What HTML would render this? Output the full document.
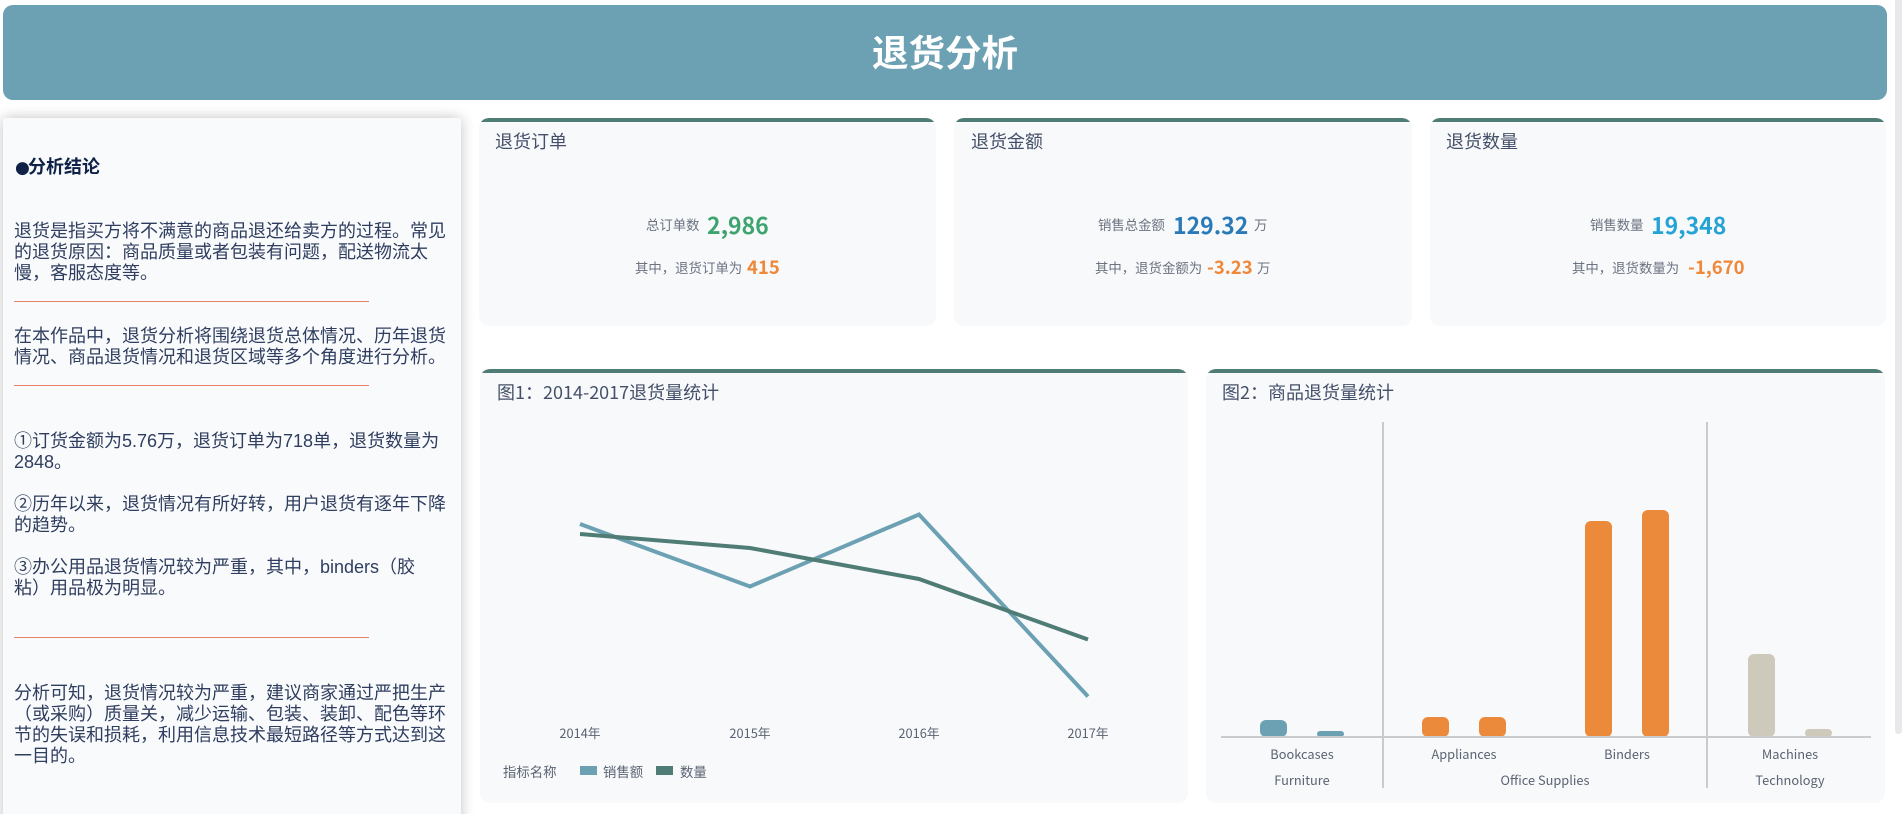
<!DOCTYPE html>
<html lang="zh-CN"><head><meta charset="utf-8"><title>退货分析</title>
<style>
html,body{margin:0;padding:0;background:#fff;width:1904px;height:814px;overflow:hidden}
*{box-sizing:border-box}
body{position:relative;font-family:"Liberation Sans","Noto Sans CJK SC",sans-serif}
.a{position:absolute}
.t{position:absolute;white-space:nowrap;line-height:30px;font-family:"Noto Sans CJK SC",sans-serif}
.c{transform:translateX(-50%)}
#hd{left:3px;top:5px;width:1884px;height:95px;background:#6ca0b3;border-radius:10px}
#title{left:872px;top:31px;font-size:36.5px;font-weight:700;color:#fff;line-height:40px;position:absolute;font-family:"Noto Sans CJK SC",sans-serif;white-space:nowrap}
#sb{left:3px;top:118px;width:458px;height:720px;background:#f9fafc;border-radius:3px;box-shadow:0 0 14px rgba(0,0,0,.24)}
.l{position:absolute;left:14px;font-size:18px;line-height:21px;color:#2f3e5f;white-space:nowrap}
.hr{position:absolute;left:14px;width:355px;height:1px;background:#e8806a}
.card{position:absolute;background:#f8f9fb;border-radius:10px;overflow:hidden}
.card:before{content:"";position:absolute;left:0;top:0;right:0;height:4px;background:#4f7c75}
.h{font-size:18px;color:#445069}
.s{font-size:13.4px;color:#6b7280}
.big{font-size:23px;font-weight:700}
.mid{font-size:18.5px;font-weight:700;color:#f0883a}
.x{font-size:12.8px;color:#5a6373}
.lg{font-size:13.4px}
.bar{position:absolute;border-radius:6px}
#scroll{left:1895px;top:0;width:7px;height:734px;background:#e8e9eb;border-radius:0 0 4px 4px}
</style></head><body>
<div class="a" id="hd"></div>
<div id="title">退货分析</div>

<div class="a" id="sb"></div>
<div class="l" style="left:15px;top:157px;color:#0f2147;font-weight:700"><span style="display:inline-block;width:13px;font-size:17px;font-family:'DejaVu Sans',sans-serif;letter-spacing:-3px;vertical-align:0">●</span>分析结论</div>
<div class="l" style="top:221px">退货是指买方将不满意的商品退还给卖方的过程。常见</div>
<div class="l" style="top:242px">的退货原因：商品质量或者包装有问题，配送物流太</div>
<div class="l" style="top:263px">慢，客服态度等。</div>
<div class="hr" style="top:301px"></div>
<div class="l" style="top:326px">在本作品中，退货分析将围绕退货总体情况、历年退货</div>
<div class="l" style="top:347px">情况、商品退货情况和退货区域等多个角度进行分析。</div>
<div class="hr" style="top:385px"></div>
<div class="l" style="top:431px">①订货金额为5.76万，退货订单为718单，退货数量为</div>
<div class="l" style="top:452px">2848。</div>
<div class="l" style="top:494px">②历年以来，退货情况有所好转，用户退货有逐年下降</div>
<div class="l" style="top:515px">的趋势。</div>
<div class="l" style="top:557px">③办公用品退货情况较为严重，其中，binders（胶</div>
<div class="l" style="top:578px">粘）用品极为明显。</div>
<div class="hr" style="top:637px"></div>
<div class="l" style="top:683px">分析可知，退货情况较为严重，建议商家通过严把生产</div>
<div class="l" style="top:704px">（或采购）质量关，减少运输、包装、装卸、配色等环</div>
<div class="l" style="top:725px">节的失误和损耗，利用信息技术最短路径等方式达到这</div>
<div class="l" style="top:746px">一目的。</div>

<div class="card" style="left:479px;top:118px;width:457px;height:208px"></div>
<div class="card" style="left:954px;top:118px;width:458px;height:208px"></div>
<div class="card" style="left:1430px;top:118px;width:456px;height:208px"></div>
<div class="t h" style="left:495px;top:126px">退货订单</div>
<div class="t h" style="left:971px;top:126px">退货金额</div>
<div class="t h" style="left:1446px;top:126px">退货数量</div>

<div class="t s" style="left:646px;top:209px">总订单数</div>
<div class="t big" style="left:707px;top:209px;color:#3ea46f">2,986</div>
<div class="t s" style="left:635px;top:252px">其中，退货订单为</div>
<div class="t mid" style="left:747px;top:252px">415</div>

<div class="t s" style="left:1098px;top:209px">销售总金额</div>
<div class="t big" style="left:1173px;top:209px;color:#2a7ab8">129.32</div>
<div class="t s" style="left:1254px;top:209px">万</div>
<div class="t s" style="left:1095px;top:252px">其中，退货金额为</div>
<div class="t mid" style="left:1207px;top:252px">-3.23</div>
<div class="t s" style="left:1257px;top:252px">万</div>

<div class="t s" style="left:1590px;top:209px">销售数量</div>
<div class="t big" style="left:1651px;top:209px;color:#24a3d4">19,348</div>
<div class="t s" style="left:1572px;top:252px">其中，退货数量为</div>
<div class="t mid" style="left:1688px;top:252px">-1,670</div>

<div class="card" style="left:480px;top:369px;width:708px;height:434px"></div>
<div class="card" style="left:1206px;top:369px;width:679px;height:434px"></div>
<div class="t h" style="left:497px;top:377px">图1：2014-2017退货量统计</div>
<div class="t h" style="left:1222px;top:377px">图2：商品退货量统计</div>

<svg class="a" style="left:480px;top:369px" width="708" height="434">
<polyline fill="none" stroke="#6ca0b3" stroke-width="4" points="100,155 270,217.5 439,145.5 608,327.5"/>
<polyline fill="none" stroke="#4f7c75" stroke-width="4" points="100,165 270,179 439,210 608,270.5"/>
</svg>
<div class="t x c" style="left:580px;top:718px">2014年</div>
<div class="t x c" style="left:750px;top:718px">2015年</div>
<div class="t x c" style="left:919px;top:718px">2016年</div>
<div class="t x c" style="left:1088px;top:718px">2017年</div>
<div class="t x lg" style="left:503px;top:756px">指标名称</div>
<div class="a" style="left:580px;top:766px;width:17px;height:9px;background:#6ca0b3"></div>
<div class="t x lg" style="left:603px;top:756px">销售额</div>
<div class="a" style="left:656px;top:766px;width:17px;height:9px;background:#4f7c75"></div>
<div class="t x lg" style="left:680px;top:756px">数量</div>

<div class="bar" style="left:1260px;top:720px;width:27px;height:17px;background:#6ca0b3"></div>
<div class="bar" style="left:1317px;top:731px;width:27px;height:6px;background:#6ca0b3;border-radius:3px"></div>
<div class="bar" style="left:1422px;top:717px;width:27px;height:20px;background:#ec8a3c"></div>
<div class="bar" style="left:1479px;top:717px;width:27px;height:20px;background:#ec8a3c"></div>
<div class="bar" style="left:1585px;top:521px;width:27px;height:216px;background:#ec8a3c"></div>
<div class="bar" style="left:1642px;top:510px;width:27px;height:227px;background:#ec8a3c"></div>
<div class="bar" style="left:1748px;top:654px;width:27px;height:83px;background:#cecabb"></div>
<div class="bar" style="left:1805px;top:729px;width:27px;height:8px;background:#cecabb;border-radius:4px"></div>
<div class="a" style="left:1221px;top:736px;width:650px;height:2px;background:#c9cbcf"></div>
<div class="a" style="left:1382px;top:422px;width:2px;height:366px;background:#c9cbcf"></div>
<div class="a" style="left:1706px;top:422px;width:2px;height:366px;background:#c9cbcf"></div>
<div class="t x c" style="left:1302px;top:739px">Bookcases</div>
<div class="t x c" style="left:1464px;top:739px">Appliances</div>
<div class="t x c" style="left:1627px;top:739px">Binders</div>
<div class="t x c" style="left:1790px;top:739px">Machines</div>
<div class="t x c" style="left:1302px;top:765px">Furniture</div>
<div class="t x c" style="left:1545px;top:765px">Office Supplies</div>
<div class="t x c" style="left:1790px;top:765px">Technology</div>

<div class="a" id="scroll"></div>
</body></html>
